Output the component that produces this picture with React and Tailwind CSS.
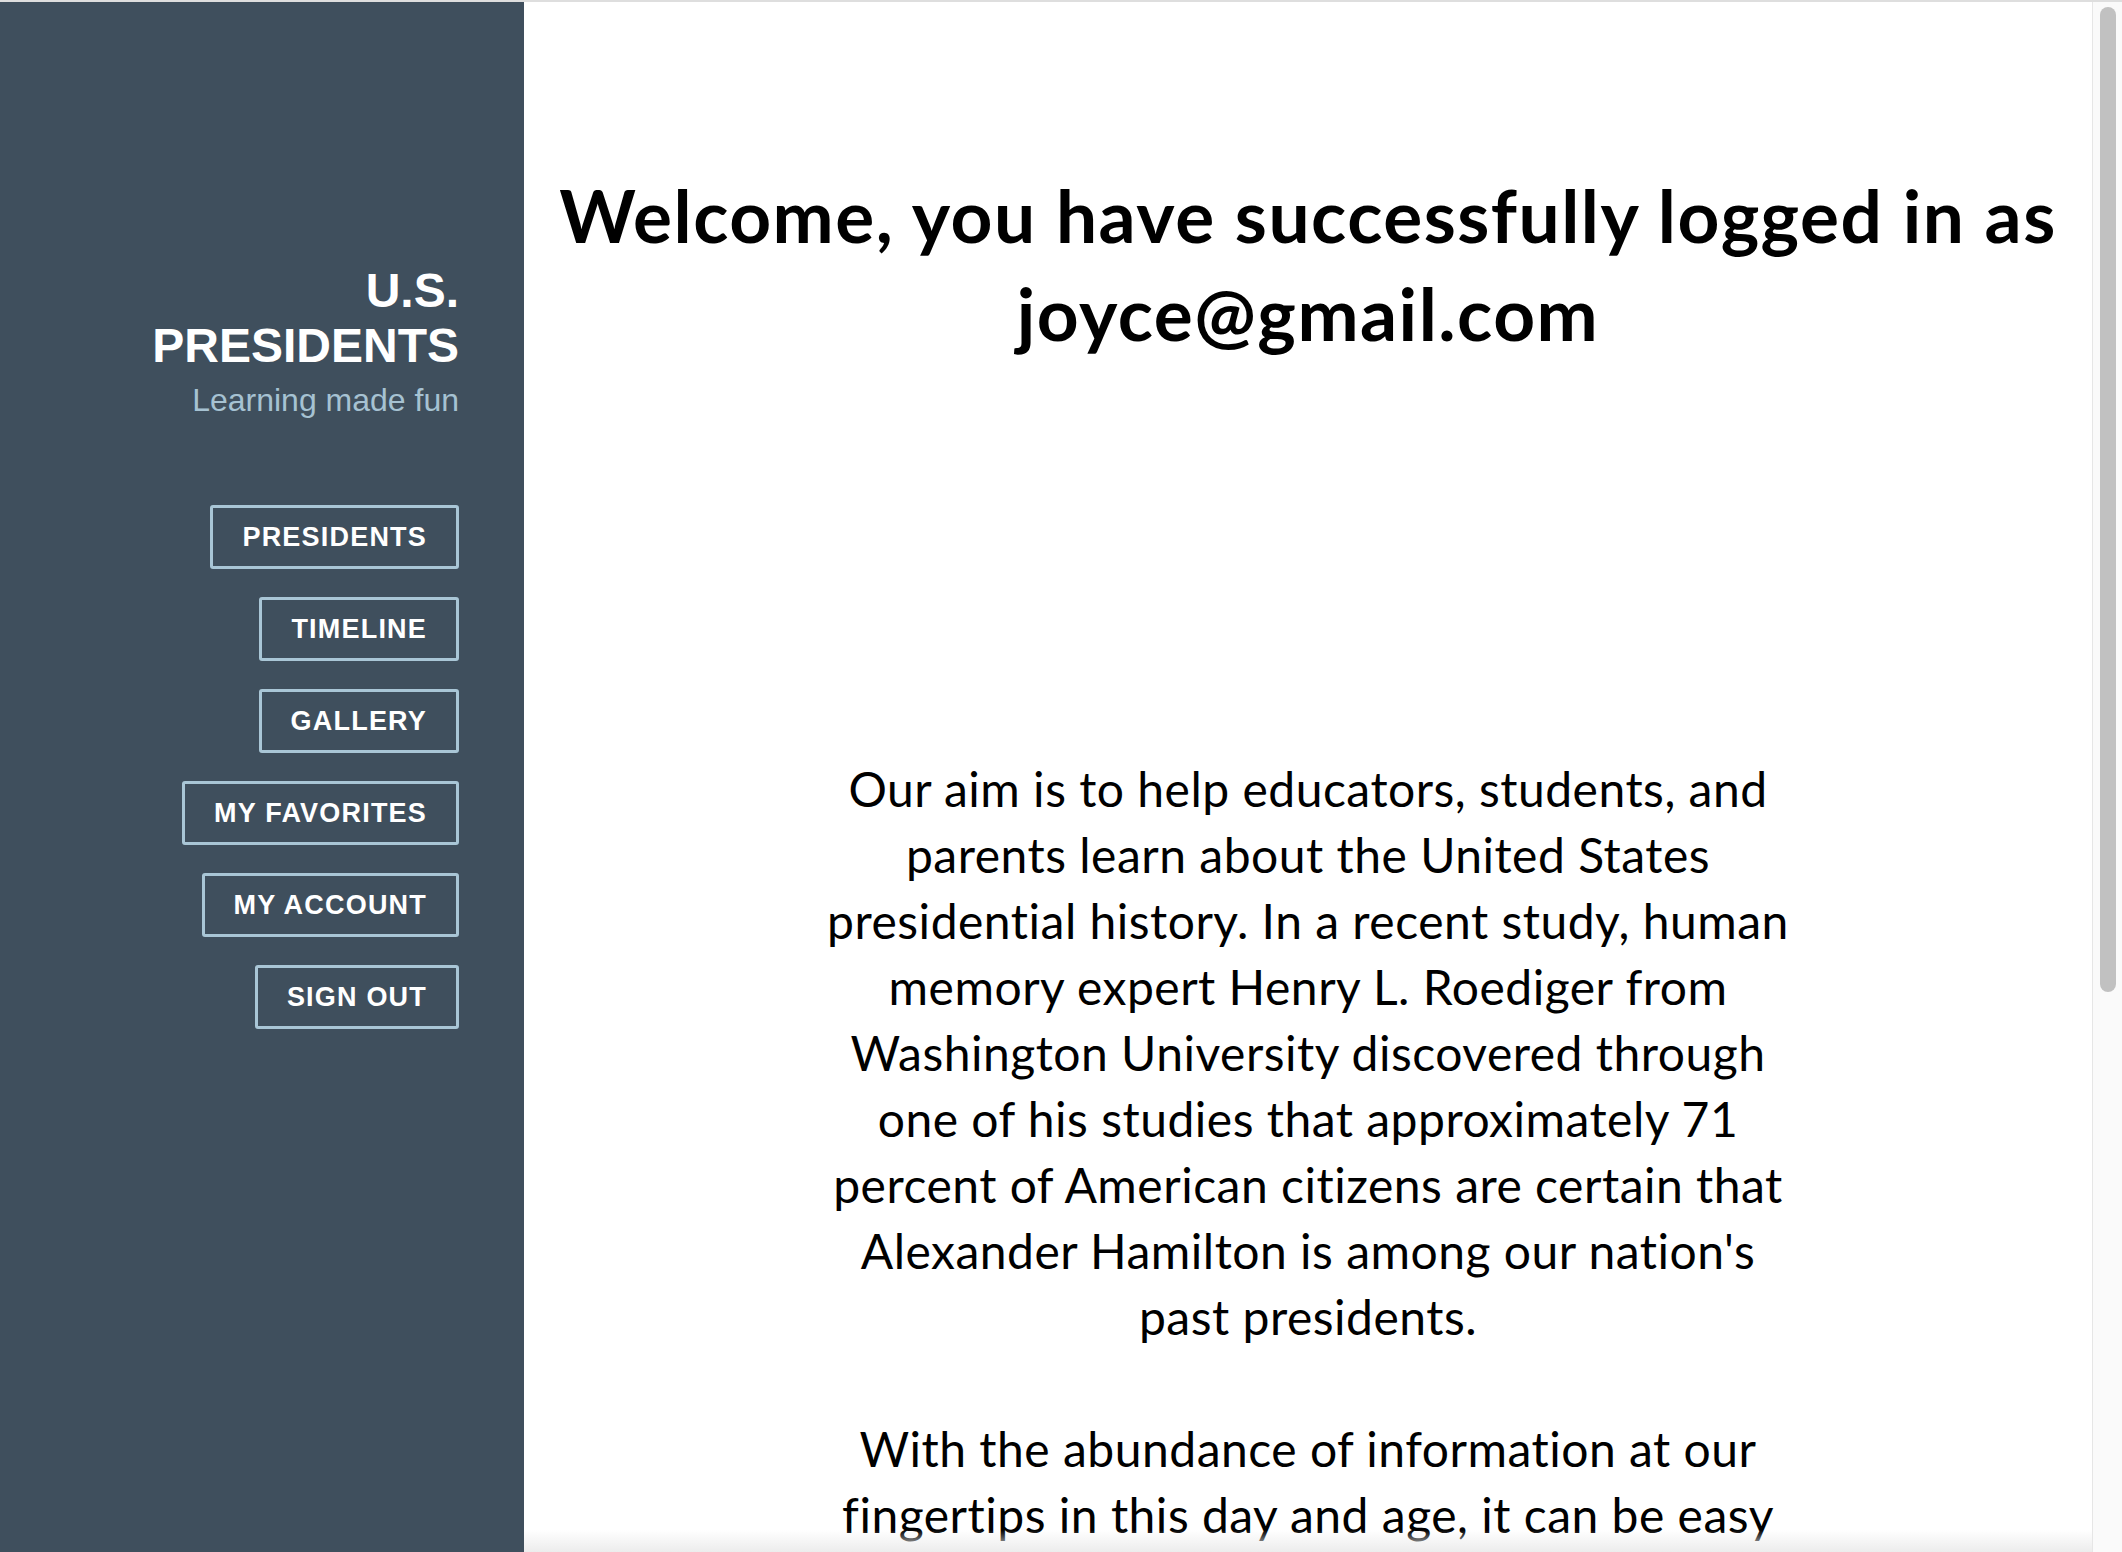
const navItems = ['Presidents', 'Timeline', 'Gallery', 'My Favorites', 'My Account', 'Sign Out'];

export default function App() {
  return (
    <div className="relative flex h-screen w-full flex-col overflow-hidden bg-white">
      <div className="h-[2px] shrink-0 bg-[#dedede]" />
      <div className="flex min-h-0 flex-1">
        <aside className="flex w-[524px] shrink-0 flex-col items-end bg-[#3f4f5d] pr-[65px] pt-[261px] font-['Liberation_Sans',Arial,sans-serif]">
          <h1 className="text-right text-[48px] font-bold leading-[55px] text-white">
            U.S.<br />PRESIDENTS
          </h1>
          <p className="mt-[8px] text-[32px] leading-[38px] text-[#a6c2d2]">Learning made fun</p>
          <nav className="mt-[86px] flex flex-col items-end gap-[28px]">
            {navItems.map((item) => (
              <button
                key={item}
                className="flex h-[64px] items-center rounded-[3px] border-[3px] border-[#a9c6d6] px-[29px] text-[27px] font-bold uppercase tracking-[1.2px] text-white"
              >
                {item}
              </button>
            ))}
          </nav>
        </aside>

        <main className="relative min-w-0 flex-1 overflow-hidden px-[20px] pt-[164px] text-center text-black">
          <h2 className="font-['Lato',sans-serif] text-[73px] font-bold leading-[98px] tracking-[1.5px]">
            Welcome, you have successfully logged in as joyce@gmail.com
          </h2>
          <div className="mx-auto mt-[394px] max-w-[980px] font-['Lato',sans-serif] text-[48px] leading-[66px] tracking-[0.5px]">
            <p>
              Our aim is to help educators, students, and parents learn about the United States presidential history. In a recent study, human memory expert Henry L. Roediger from Washington University discovered through one of his studies that approximately 71 percent of American citizens are certain that Alexander Hamilton is among our nation's past presidents.
            </p>
            <p className="mt-[66px]">
              With the abundance of information at our fingertips in this day and age, it can be easy to forget the people and the events that shaped the nation we live in today.
            </p>
          </div>
          <div className="pointer-events-none absolute inset-x-0 bottom-0 h-[22px] bg-linear-to-b from-white/0 to-[#ececec]" />
        </main>

        <div className="w-[30px] shrink-0 border-l border-[#e6e6e6] bg-[#fafafa] pl-[7px] pt-[5px]">
          <div className="h-[985px] w-[16px] rounded-full bg-[#c1c1c1]" />
        </div>
      </div>
    </div>
  );
}
